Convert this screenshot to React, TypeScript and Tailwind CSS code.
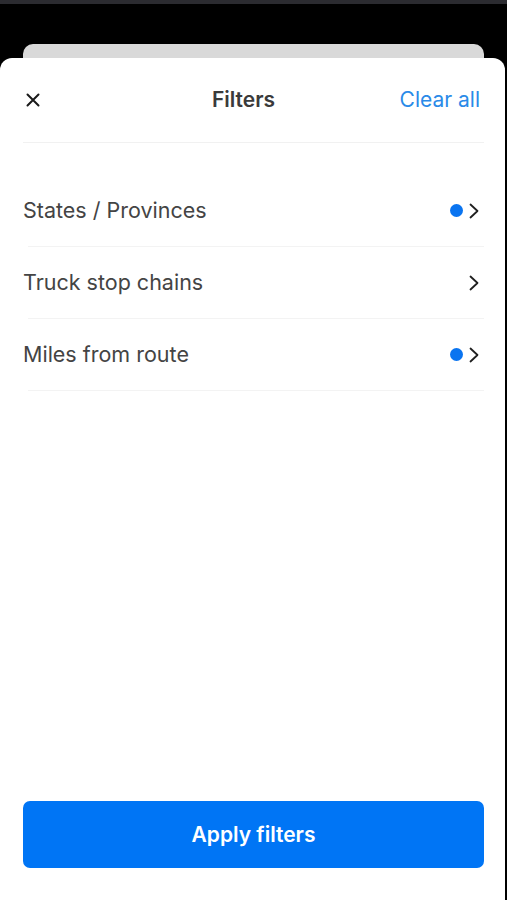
import React from 'react';

const rows = [
    { label: 'States / Provinces', active: true },
    { label: 'Truck stop chains', active: false },
    { label: 'Miles from route', active: true },
];

const Chevron = () => (
    <svg width="12" height="16" viewBox="0 0 12 16" fill="none">
        <path d="M2.5 1.5 L9.5 8 L2.5 14.5" stroke="#1f1f1f" strokeWidth="1.8" strokeLinecap="round" strokeLinejoin="round" />
    </svg>
);

const App = () => {
    return (
        <div className="flex flex-col h-[900px] w-full bg-black" style={{ fontFamily: 'Inter, "Noto Sans", sans-serif' }}>
            <div className="h-[4px] bg-[#2b2b30]" />
            <div className="pt-[40px]">
                {/* card behind the sheet */}
                <div className="ml-[23px] mr-[23px] h-[14px] rounded-t-[10px] bg-[#d9d9d9]" />
            </div>

            {/* Sheet */}
            <div className="flex-1 flex flex-col mr-[2px] bg-white rounded-t-[12px] pl-[23px] pr-[21px]">
                <div className="grid grid-cols-3 items-center h-[85px] border-b border-[#f1f1f1]">
                    <button className="justify-self-start ml-[3px]">
                        <svg width="14" height="14" viewBox="0 0 14 14" fill="none">
                            <path d="M1.5 1.5 L12.5 12.5 M12.5 1.5 L1.5 12.5" stroke="#1a1a1a" strokeWidth="2" strokeLinecap="round" />
                        </svg>
                    </button>
                    <h1 className="justify-self-center mr-[20px] text-[21px] font-semibold text-[#3a3a3a]">Filters</h1>
                    <button className="justify-self-end text-[21px] text-[#2a8ae8] pr-[4px]">Clear all</button>
                </div>

                <div className="mt-[32px] flex flex-col">
                    {rows.map((row) => (
                        <div key={row.label} className="flex flex-col">
                            <div className="flex items-center justify-between h-[71px]">
                                <span className="text-[21.5px] text-[#444444]">{row.label}</span>
                                <div className="flex items-center gap-[5px] pr-[4px]">
                                    {row.active && <span className="w-[13px] h-[13px] rounded-full bg-[#0a74f0]" />}
                                    <Chevron />
                                </div>
                            </div>
                            <div className="ml-[5px] h-px bg-[#f3f3f3]" />
                        </div>
                    ))}
                </div>

                <div className="flex-1" />

                <button className="mb-[32px] h-[67px] rounded-[7px] bg-[#0075f5] text-white text-[21px] font-semibold">
                    Apply filters
                </button>
            </div>
        </div>
    );
};

export default App;
